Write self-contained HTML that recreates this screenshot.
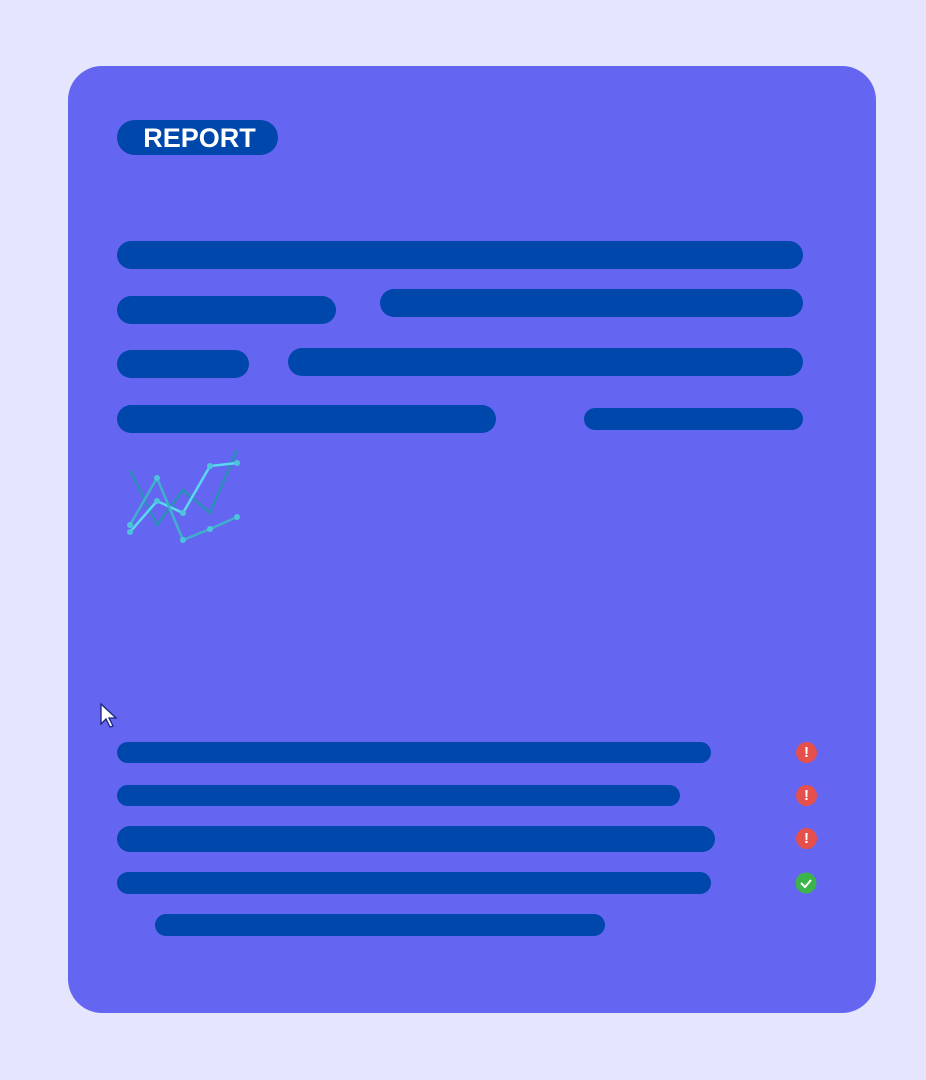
<!DOCTYPE html>
<html><head><style>
body{margin:0;width:926px;height:1080px;background:#e5e5fd;position:relative;overflow:hidden;font-family:"Liberation Sans",sans-serif}
.card{position:absolute;left:68px;top:66px;width:808px;height:947px;background:#6466f1;border-radius:34px}
.b{position:absolute;background:#0047ab;border-radius:14px}
.badge{position:absolute;left:117px;top:120px;width:161px;height:35px;background:#0047ab;border-radius:18px;color:#fff;font-weight:bold;font-size:27px;line-height:36px;text-align:center;padding-left:4px;box-sizing:border-box}
.ic{position:absolute;width:21px;height:21px;border-radius:50%;background:#e5504d;color:#fff;font-size:15px;font-weight:bold;text-align:center;line-height:21px}
</style></head><body>
<div class="card"></div>
<div class="badge">REPORT</div>
<div class="b" style="left:117px;top:241px;width:686px;height:28px"></div>
<div class="b" style="left:117px;top:296px;width:219px;height:28px"></div>
<div class="b" style="left:380px;top:289px;width:423px;height:28px"></div>
<div class="b" style="left:117px;top:350px;width:132px;height:28px"></div>
<div class="b" style="left:288px;top:348px;width:515px;height:28px"></div>
<div class="b" style="left:117px;top:405px;width:379px;height:28px"></div>
<div class="b" style="left:584px;top:408px;width:219px;height:22px;border-radius:11px"></div>
<svg style="position:absolute;left:0;top:0" width="926" height="1080">
<g fill="none" stroke-width="2.5">
<polyline points="130,470 157,525 183,490 210,513 237,450" stroke="#2a8fb8"/>
<polyline points="130,532 157,501 183,513 210,466 237,463" stroke="#5ad8ef"/>
<polyline points="130,525 157,478 183,540 210,529 237,517" stroke="#3fb0cc"/>
</g>
<g fill="#4cc4dc"><circle cx="130" cy="532" r="3"/><circle cx="157" cy="501" r="3"/><circle cx="183" cy="513" r="3"/><circle cx="210" cy="466" r="3"/><circle cx="237" cy="463" r="3"/><circle cx="130" cy="525" r="3"/><circle cx="157" cy="478" r="3"/><circle cx="183" cy="540" r="3"/><circle cx="210" cy="529" r="3"/><circle cx="237" cy="517" r="3"/></g>
<path d="M101,704 L101,724 L106,719 L110,727 L113,726 L109,718 L116,718 Z" fill="#fff" stroke="#1a237e" stroke-width="1.3"/>
<circle cx="806" cy="883" r="10.5" fill="#3bb54a"/>
<path d="M801,883 L805,887 L811,880" fill="none" stroke="#fff" stroke-width="2"/>
</svg>
<div class="b" style="left:117px;top:742px;width:594px;height:21px;border-radius:11px"></div>
<div class="b" style="left:117px;top:785px;width:563px;height:21px;border-radius:11px"></div>
<div class="b" style="left:117px;top:826px;width:598px;height:26px;border-radius:13px"></div>
<div class="b" style="left:117px;top:872px;width:594px;height:22px;border-radius:11px"></div>
<div class="b" style="left:155px;top:914px;width:450px;height:22px;border-radius:11px"></div>
<div class="ic" style="left:796px;top:742px">!</div>
<div class="ic" style="left:796px;top:785px">!</div>
<div class="ic" style="left:796px;top:828px">!</div>
</body></html>
